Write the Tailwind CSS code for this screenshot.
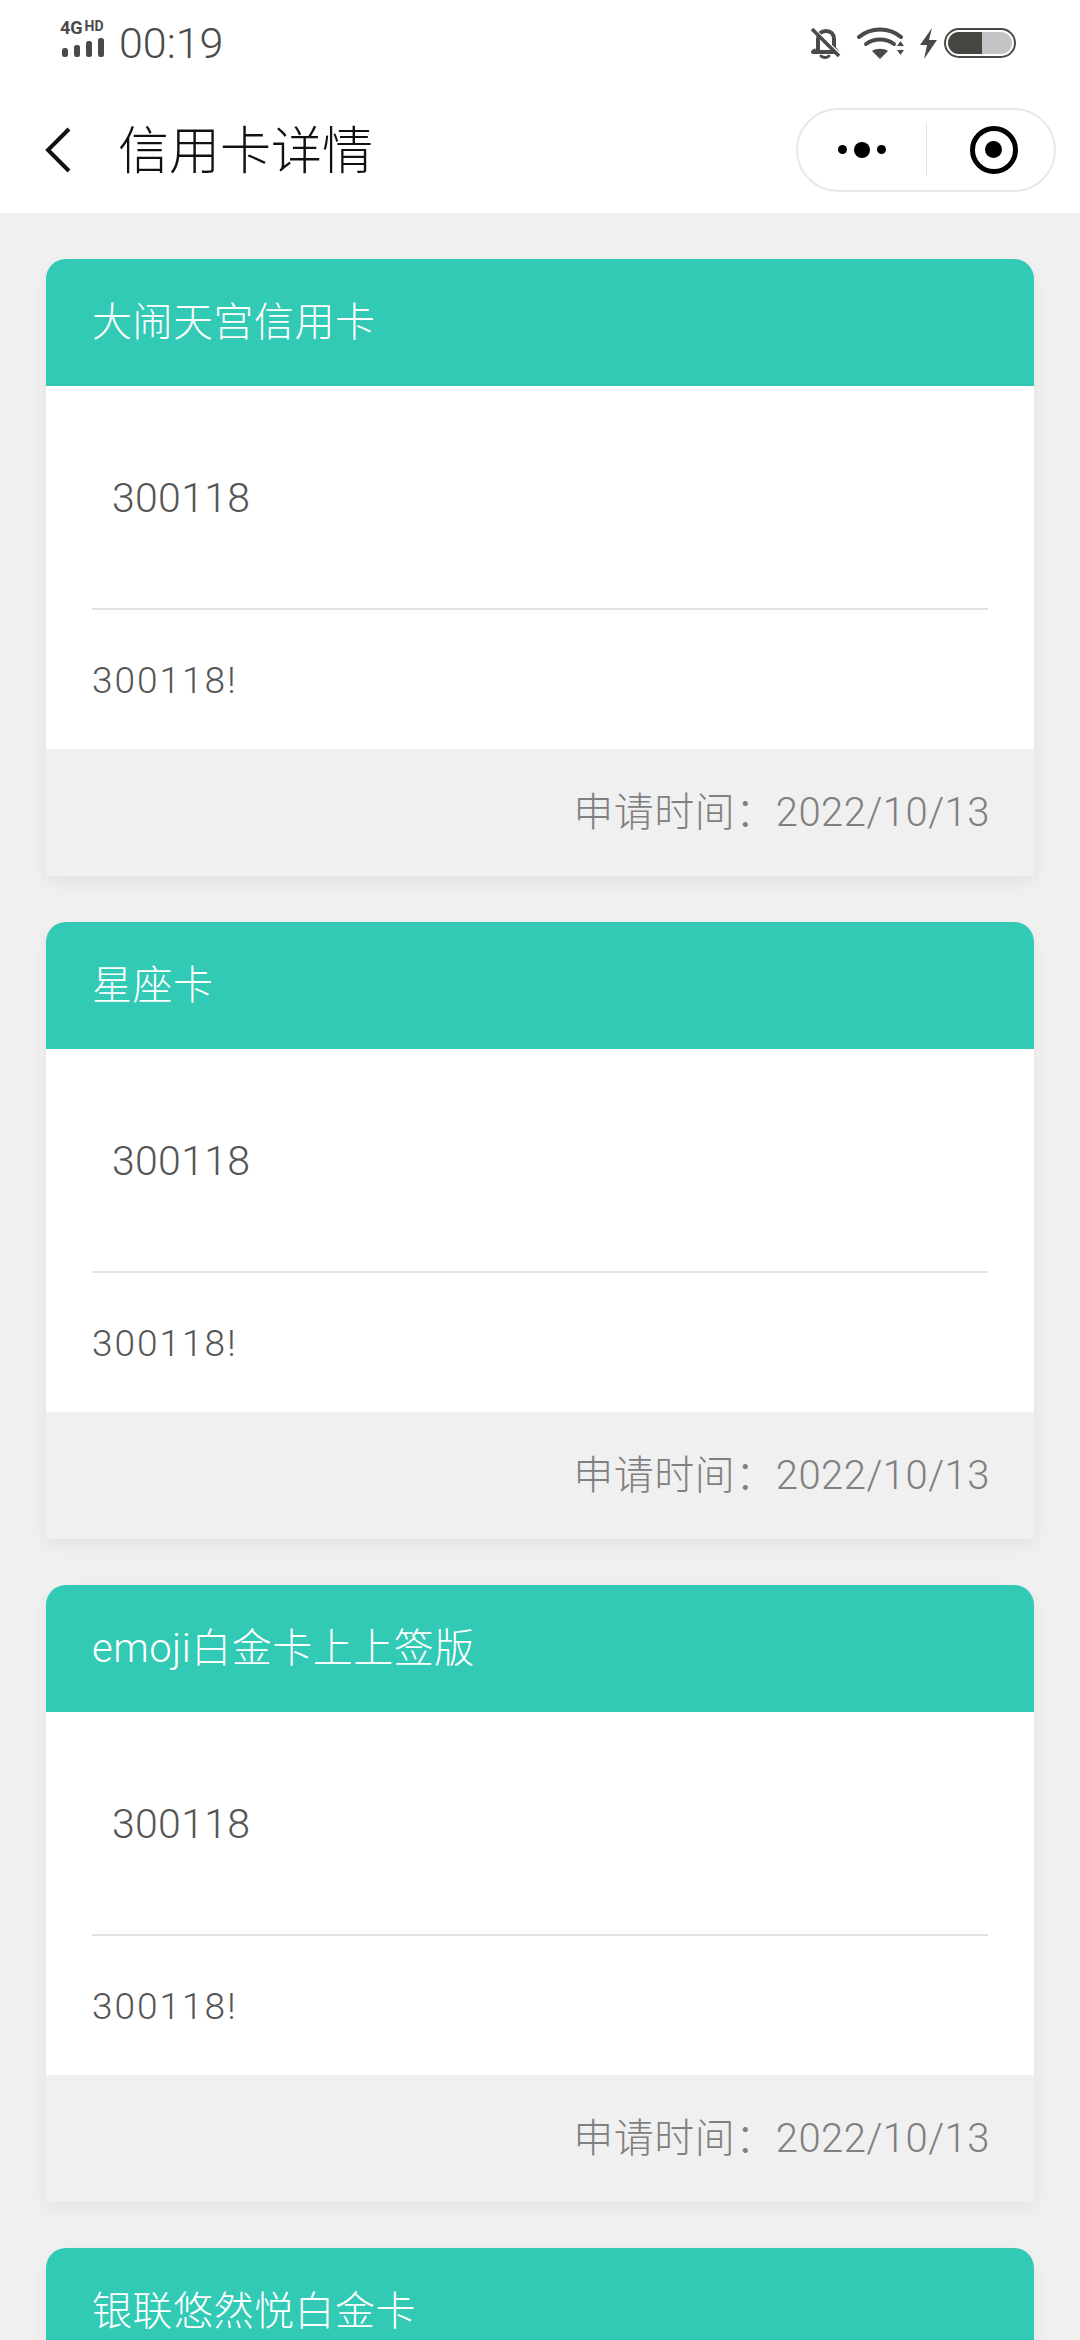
<!DOCTYPE html>
<html lang="zh-CN">
<head>
  <meta charset="UTF-8" />
  <meta name="viewport" content="width=device-width, initial-scale=1.0"/>
  <title>信用卡详情</title>
  <script src="https://cdn.jsdelivr.net/npm/@tailwindcss/browser@4"></script>
</head>
<body class="bg-[#f0f0f0] h-[2340px] overflow-hidden font-['Roboto','Noto_Sans_CJK_SC',sans-serif]">

  <!-- status bar -->
  <div class="bg-white h-[86px] flex items-center justify-between pl-[60px] pr-[64px] text-[#4a4a4a]">
    <div class="flex items-center gap-[12px]">
      <div class="w-[47px] flex flex-col mb-[8px]">
        <div class="flex items-start h-[16px] leading-[16px] font-bold">
          <span class="text-[18px]">4G</span>
          <span class="text-[14px] leading-[13px] ml-[2px]">HD</span>
        </div>
        <svg width="47" height="21" viewBox="0 0 47 21" class="mt-[1px]">
          <rect x="2" y="11" width="6" height="9" rx="2.5" fill="#4a4a4a"/>
          <rect x="14" y="8" width="6" height="12" rx="2.5" fill="#4a4a4a"/>
          <rect x="26" y="4" width="6" height="16" rx="2.5" fill="#4a4a4a"/>
          <rect x="38" y="1" width="6" height="19" rx="2.5" fill="#4a4a4a"/>
        </svg>
      </div>
      <span class="text-[43px] leading-none font-light">00:19</span>
    </div>
    <div class="flex items-center">
      <svg width="32" height="34" viewBox="0 0 32 34" fill="none" stroke="#4a4a4a">
        <path d="M8 25V13C8 8 11 5 16 5s8 3 8 8v9l3 4H3l3-2" stroke-width="4" stroke-linejoin="round"/>
        <path d="M11 30c2 2 6 2 8 0" stroke-width="3" stroke-linecap="round"/>
        <path d="M3 2l27 26" stroke="#fff" stroke-width="2"/>
        <path d="M2 3l27 27" stroke-width="3.5"/>
      </svg>
      <svg width="48" height="34" viewBox="0 0 48 34" fill="none" stroke="#4a4a4a" class="ml-[15px]">
        <path d="M2 11C14 1 32 1 44 11" stroke-width="4" stroke-linecap="round"/>
        <path d="M9 18c8-6 20-6 28 0" stroke-width="4" stroke-linecap="round"/>
        <path d="M15 25l8 8 8-8c-4-3-12-3-16 0z" fill="#4a4a4a" stroke="none"/>
        <path d="M40 20l3.500-5 3.500 5zM40 24h7l-3.500 5z" fill="#4a4a4a" stroke="none"/>
      </svg>
      <svg width="18" height="31" viewBox="0 0 18 31" class="ml-[15px]">
        <path d="M12 0L0 17h7L4 31 17 12h-8z" fill="#4a4a4a"/>
      </svg>
      <div class="ml-[6px] w-[72px] h-[30px] rounded-full border-2 border-[#4a4a4a] p-[2px]">
        <div class="h-full rounded-full bg-[#c4c4c4] overflow-hidden">
          <div class="h-full w-[34px] bg-[#45463f]"></div>
        </div>
      </div>
    </div>
  </div>

  <!-- nav bar -->
  <div class="bg-white h-[127px] flex items-center pl-[44px] pr-[24px]">
    <svg width="28" height="46" viewBox="0 0 28 46" fill="none" stroke="#111" stroke-width="4">
      <path d="M25 2L4 23l21 21"/>
    </svg>
    <span class="ml-[46px] pt-[3px] text-[51px] leading-none font-light text-[#111]">信用卡详情</span>
    <div class="ml-auto w-[260px] h-[84px] rounded-full border-2 border-[#e8e8e8] flex items-center">
      <div class="w-[127px] flex items-center justify-center gap-[7px]">
        <span class="w-[9px] h-[9px] rounded-full bg-black"></span>
        <span class="w-[16px] h-[16px] rounded-full bg-black"></span>
        <span class="w-[9px] h-[9px] rounded-full bg-black"></span>
      </div>
      <div class="ml-[1px] w-px h-[53px] bg-[#e4e4e4]"></div>
      <div class="flex-1 flex items-center justify-center pl-[6px]">
        <div class="w-[48px] h-[48px] rounded-full border-[5px] border-black flex items-center justify-center">
          <span class="w-[17px] h-[17px] rounded-full bg-black"></span>
        </div>
      </div>
    </div>
  </div>

  <!-- cards -->
  <div class="pt-[46px] px-[46px] flex flex-col gap-[46px]">

    <div class="rounded-t-[20px] shadow-[0_6px_16px_rgba(0,0,0,0.06)]">
      <div class="h-[127px] bg-[#32c9b5] rounded-t-[20px] flex items-center px-[46px] text-[40px] tracking-[0.5px] font-light text-white">大闹天宫信用卡</div>
      <div class="bg-white px-[46px]">
        <div class="h-[224px] border-b-2 border-[#e3e3e3] flex items-center pl-[20px] pt-[3px] text-[41px] tracking-[0.3px] font-light text-[#555]">300118</div>
        <div class="h-[139px] flex items-center pt-[2px] text-[37px] tracking-[2px] font-light text-[#555]">300118!</div>
      </div>
      <div class="h-[127px] bg-[#f0f0f0] flex items-center justify-end pl-[46px] pr-[44px] text-[40px] tracking-[0.5px] font-light text-[#808080]">申请时间：2022/10/13</div>
    </div>

    <div class="rounded-t-[20px] shadow-[0_6px_16px_rgba(0,0,0,0.06)]">
      <div class="h-[127px] bg-[#32c9b5] rounded-t-[20px] flex items-center px-[46px] text-[40px] tracking-[0.5px] font-light text-white">星座卡</div>
      <div class="bg-white px-[46px]">
        <div class="h-[224px] border-b-2 border-[#e3e3e3] flex items-center pl-[20px] pt-[3px] text-[41px] tracking-[0.3px] font-light text-[#555]">300118</div>
        <div class="h-[139px] flex items-center pt-[2px] text-[37px] tracking-[2px] font-light text-[#555]">300118!</div>
      </div>
      <div class="h-[127px] bg-[#f0f0f0] flex items-center justify-end pl-[46px] pr-[44px] text-[40px] tracking-[0.5px] font-light text-[#808080]">申请时间：2022/10/13</div>
    </div>

    <div class="rounded-t-[20px] shadow-[0_6px_16px_rgba(0,0,0,0.06)]">
      <div class="h-[127px] bg-[#32c9b5] rounded-t-[20px] flex items-center px-[46px] text-[40px] tracking-[0.5px] font-light text-white">emoji白金卡上上签版</div>
      <div class="bg-white px-[46px]">
        <div class="h-[224px] border-b-2 border-[#e3e3e3] flex items-center pl-[20px] pt-[3px] text-[41px] tracking-[0.3px] font-light text-[#555]">300118</div>
        <div class="h-[139px] flex items-center pt-[2px] text-[37px] tracking-[2px] font-light text-[#555]">300118!</div>
      </div>
      <div class="h-[127px] bg-[#f0f0f0] flex items-center justify-end pl-[46px] pr-[44px] text-[40px] tracking-[0.5px] font-light text-[#808080]">申请时间：2022/10/13</div>
    </div>

    <div class="rounded-t-[20px] shadow-[0_6px_16px_rgba(0,0,0,0.06)]">
      <div class="h-[127px] bg-[#32c9b5] rounded-t-[20px] flex items-center px-[46px] text-[40px] tracking-[0.5px] font-light text-white">银联悠然悦白金卡</div>
    </div>

  </div>
</body>
</html>
